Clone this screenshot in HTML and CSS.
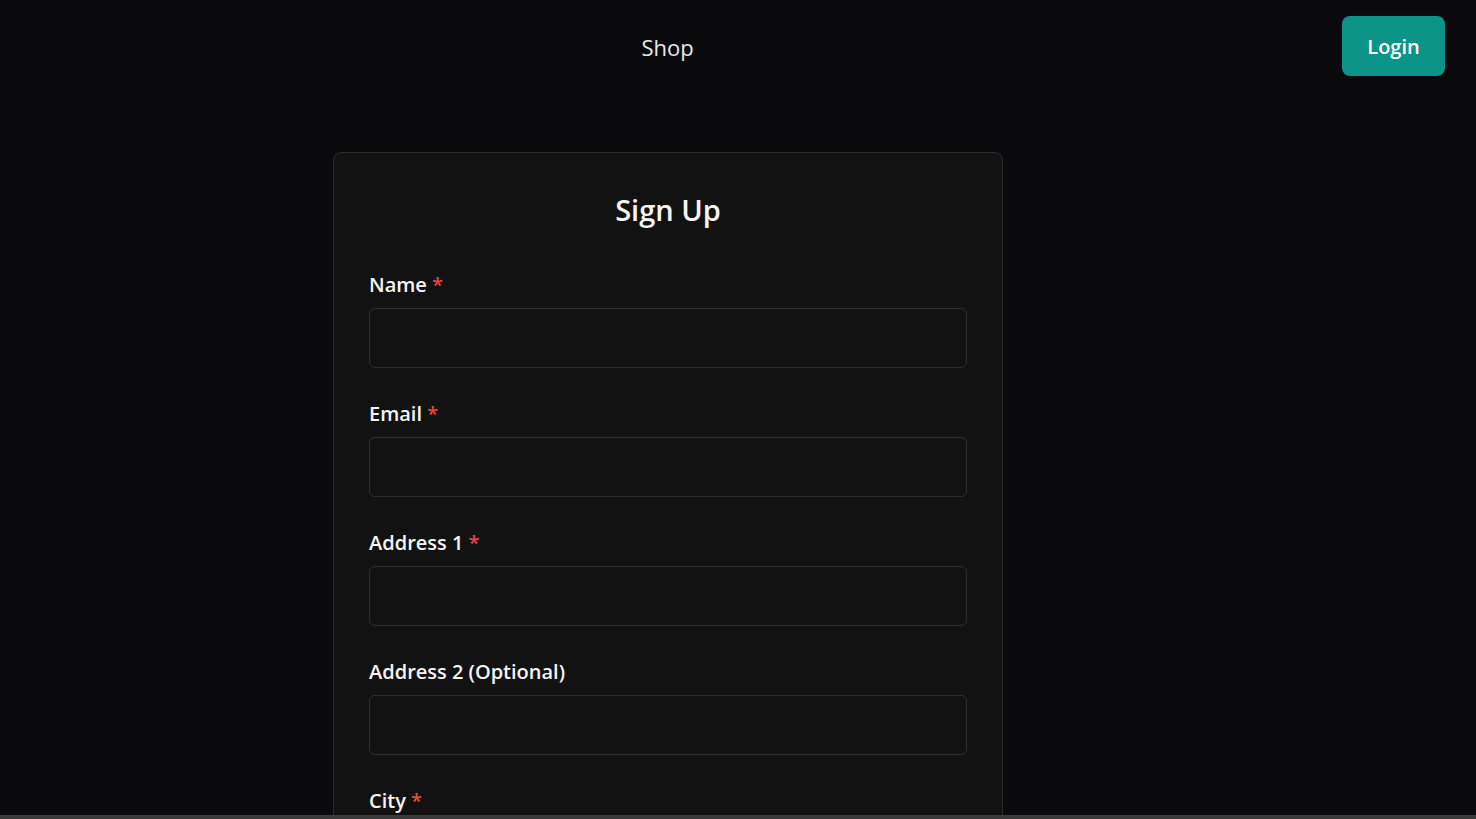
FILE: index.html
```html
<!DOCTYPE html>
<html lang="en">
<head>
<meta charset="utf-8">
<title>Sign Up</title>
<link rel="stylesheet" href="styles.css">
</head>
<body>
<header class="topbar">
  <nav class="nav"><a class="nav-link" href="#">Shop</a></nav>
  <button class="login-btn" type="button">Login</button>
</header>
<main class="main">
  <form class="card">
    <h1 class="title">Sign Up</h1>
    <div class="field">
      <label class="label">Name <span class="req">*</span></label>
      <input class="input" type="text">
    </div>
    <div class="field">
      <label class="label">Email <span class="req">*</span></label>
      <input class="input" type="email">
    </div>
    <div class="field">
      <label class="label">Address 1 <span class="req">*</span></label>
      <input class="input" type="text">
    </div>
    <div class="field">
      <label class="label">Address 2 (Optional)</label>
      <input class="input" type="text">
    </div>
    <div class="field">
      <label class="label">City <span class="req">*</span></label>
      <input class="input" type="text">
    </div>
  </form>
</main>
<div class="bottom-strip"></div>
</body>
</html>
```
FILE: styles.css
```css
* { box-sizing: border-box; }
html, body { margin: 0; padding: 0; }
body {
  background: #0a0a0c;
  color: #f5f5f5;
  font-family: "Open Sans", "Noto Sans", sans-serif;
  height: 819px;
  overflow: hidden;
}
.topbar {
  display: flex;
  align-items: center;
  padding: 16px 31px 0 0;
}
.nav {
  flex: 1;
  display: flex;
  justify-content: center;
  margin-right: 7px;
}
.nav-link {
  color: #e8e8e8;
  text-decoration: none;
  font-size: 22px;
  line-height: 30px;
  padding-top: 2px;
}
.login-btn {
  width: 103px;
  height: 60px;
  border: none;
  border-radius: 8px;
  background: #0d9488;
  color: #fff;
  font-family: inherit;
  font-size: 20px;
  font-weight: 600;
  padding-top: 2px;
}
.main {
  display: flex;
  justify-content: flex-start;
  padding: 76px 0 0 333px;
}
.card {
  width: 670px;
  background: #121212;
  border: 1px solid #2a2a2a;
  border-radius: 8px;
  padding: 37px 35px 40px;
}
.title {
  margin: 0 0 41px;
  text-align: center;
  font-size: 29px;
  font-weight: 600;
  line-height: 40px;
}
.field {
  display: flex;
  flex-direction: column;
  gap: 9px;
  margin-bottom: 32px;
}
.label {
  font-size: 20px;
  font-weight: 600;
  line-height: 28px;
}
.req { color: #ef4444; }
.input {
  height: 60px;
  background: #121212;
  border: 1px solid #2e2e2e;
  border-radius: 6px;
  color: #fff;
  font-size: 18px;
  padding: 0 14px;
}
.bottom-strip {
  position: fixed;
  left: 0;
  right: 0;
  bottom: 0;
  height: 4px;
  background: #3a3a3a;
}
```
